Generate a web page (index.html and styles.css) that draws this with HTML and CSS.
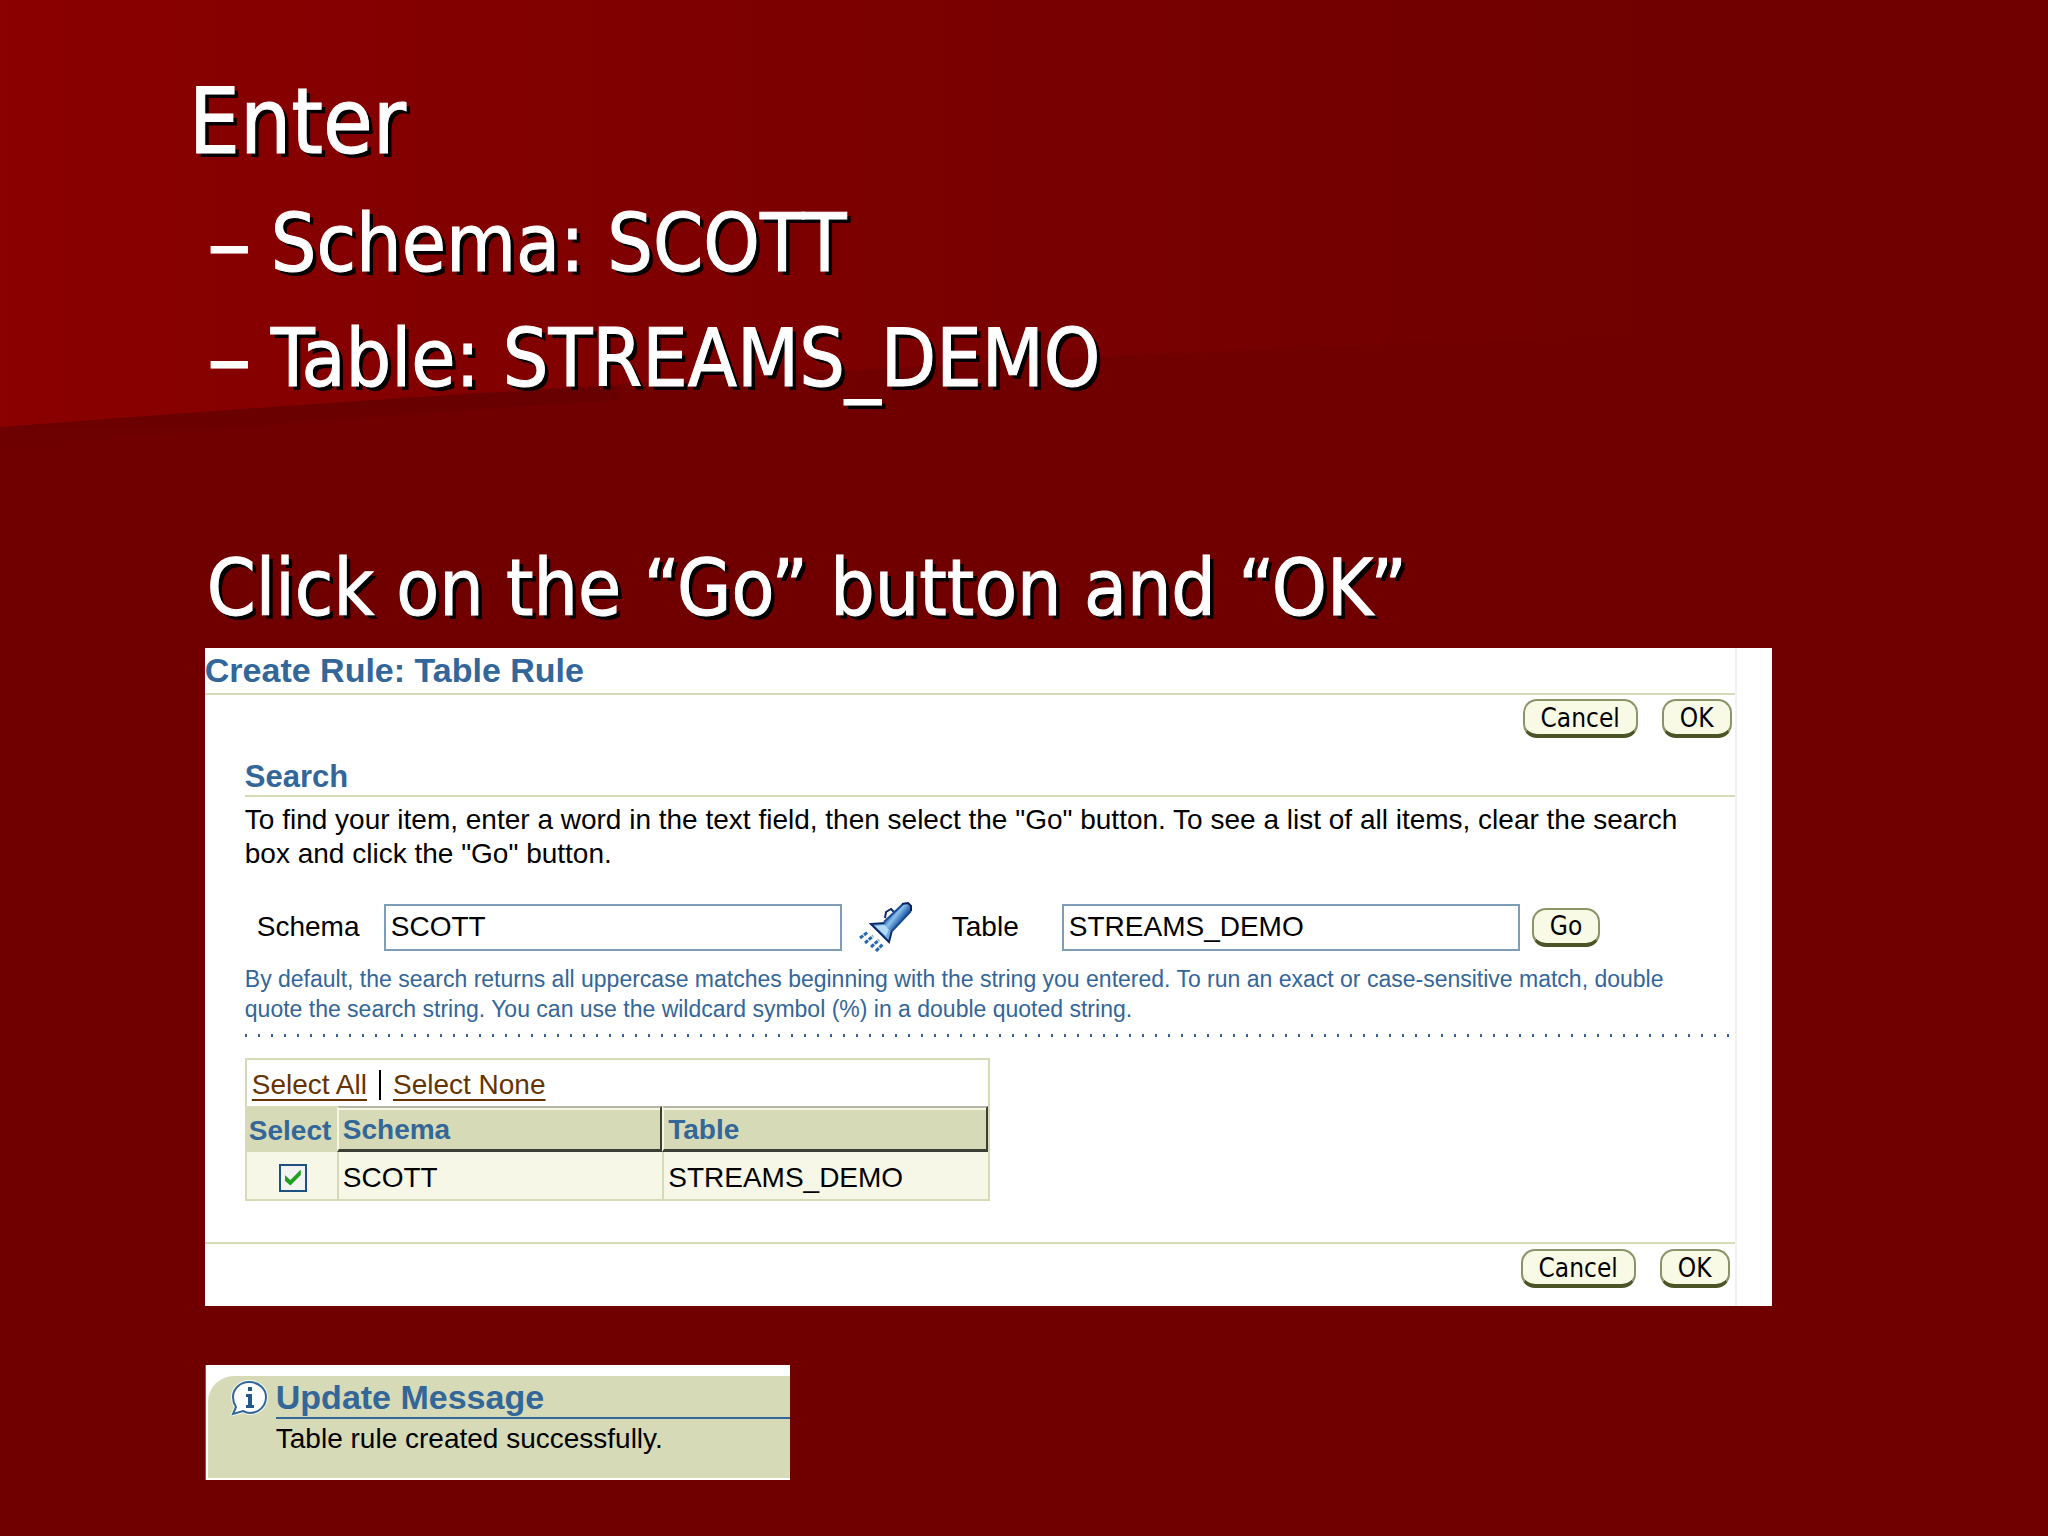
FILE: index.html
```html
<!DOCTYPE html>
<html lang="en">
<head>
    <meta charset="UTF-8">
    <meta name="viewport" content="width=device-width, initial-scale=1.0">
    <title>Create Rule: Table Rule</title>
    <link rel="stylesheet" href="styles.css">
</head>
<body>
    <svg class="backdrop" viewBox="0 0 2048 1536" preserveAspectRatio="none" aria-hidden="true">
        <defs>
            <linearGradient id="band" x1="0" y1="0" x2="1" y2="0">
                <stop offset="0" stop-color="#8b0000"/>
                <stop offset="0.35" stop-color="#7e0000"/>
                <stop offset="0.8" stop-color="#700000"/>
            </linearGradient>
            <linearGradient id="shade" x1="0" y1="0" x2="0" y2="1">
                <stop offset="0" stop-color="#660000"/>
                <stop offset="1" stop-color="#700000"/>
            </linearGradient>
        </defs>
        <path d="M0 426 Q300 402 620 386 L620 400 Q300 420 0 450 Z" fill="url(#shade)"/>
        <path d="M0 0 H2048 V320 Q1000 350 0 427 Z" fill="url(#band)"/>
    </svg>

    <main class="slide">
        <section class="slide-text">
            <h1>Enter</h1>
            <ul>
                <li><span class="dash">–</span>Schema: SCOTT</li>
                <li><span class="dash">–</span>Table: STREAMS_DEMO</li>
            </ul>
            <p>Click on the “Go” button and “OK”</p>
        </section>

        <form class="panel" onsubmit="return false">
            <div class="panel-inner">
                <h2 class="panel-title">Create Rule: Table Rule</h2>
                <div class="button-row">
                    <button type="button" class="btn">Cancel</button>
                    <button type="button" class="btn">OK</button>
                </div>

                <div class="search">
                    <h3>Search</h3>
                    <p class="intro">To find your item, enter a word in the text field, then select the "Go" button. To see a list of all items, clear the search box and click the "Go" button.</p>

                    <div class="fields">
                        <label class="label-schema" for="schema">Schema</label>
                        <input type="text" id="schema" value="SCOTT">
                        <button type="button" class="torch" aria-label="Search schema">
                            <svg width="54" height="50" viewBox="0 0 54 50">
                                <defs>
                                    <linearGradient id="steel" gradientUnits="userSpaceOnUse" x1="34" y1="10" x2="44" y2="18">
                                        <stop offset="0" stop-color="#2f6fb8"/>
                                        <stop offset="0.4" stop-color="#8cc0ec"/>
                                        <stop offset="1" stop-color="#1f5ca6"/>
                                    </linearGradient>
                                </defs>
                                <path d="M27 16 L28 10 L33 7 L36 10" fill="none" stroke="#0b2a66" stroke-width="2"/>
                                <path d="M13 22 L27 21 L34 28 L31 40 Z" fill="#6fa9e0" stroke="#0b2a66" stroke-width="2"/>
                                <path d="M17 24 L27 23 L31 27 L28 34 Z" fill="#b5daf8"/>
                                <path d="M45 2 L50 1 L54 5 L52 10 L34 29 L30 27 L26 21 Z" fill="url(#steel)"/>
                                <path d="M26 20 L45 2 M53 9 L34 29" fill="none" stroke="#1b4c92" stroke-width="2"/>
                                <path d="M44 2 L50 1 L53 4 L53 9" fill="none" stroke="#0b2260" stroke-width="2"/>
                                <path d="M2 36 L10 30 M7 41 L15 34 M13 45 L21 38 M18 49 L25 42" fill="none" stroke="#2868ae" stroke-width="3" stroke-dasharray="4 1"/>
                            </svg>
                        </button>
                        <label class="label-table" for="table">Table</label>
                        <input type="text" id="table" value="STREAMS_DEMO">
                        <button type="submit" class="btn btn-go">Go</button>
                    </div>

                    <p class="hint">By default, the search returns all uppercase matches beginning with the string you entered. To run an exact or case-sensitive match, double quote the search string. You can use the wildcard symbol (%) in a double quoted string.</p>
                    <div class="dots"></div>

                    <div class="results">
                        <div class="select-links">
                            <a href="#all">Select All</a><span class="bar"></span><a href="#none">Select None</a>
                        </div>
                        <table>
                            <thead>
                                <tr>
                                    <th class="col-select">Select</th>
                                    <th class="raised">Schema</th>
                                    <th class="raised">Table</th>
                                </tr>
                            </thead>
                            <tbody>
                                <tr>
                                    <td class="col-select"><input type="checkbox" aria-label="Select SCOTT STREAMS_DEMO" checked></td>
                                    <td>SCOTT</td>
                                    <td>STREAMS_DEMO</td>
                                </tr>
                            </tbody>
                        </table>
                    </div>
                </div>

                <div class="button-row button-row-bottom">
                    <button type="button" class="btn">Cancel</button>
                    <button type="button" class="btn">OK</button>
                </div>
            </div>
        </form>

        <section class="message">
            <div class="message-body">
                <svg class="info" width="38" height="36" viewBox="0 0 38 36" aria-hidden="true">
                    <path d="M19 2 C29 2 36 9 36 17 C36 26 29 33 20 33 C17 33 15 32 13 31 L3 34 L6 27 C4 24 3 21 3 17 C3 9 10 2 19 2 Z" fill="#fff" stroke="#f4f7ee" stroke-width="4"/>
                    <path d="M19 2 C29 2 36 9 36 17 C36 26 29 33 20 33 C17 33 15 32 13 31 L3 34 L6 27 C4 24 3 21 3 17 C3 9 10 2 19 2 Z" fill="#fff" stroke="#336699" stroke-width="2"/>
                    <path d="M18 7 H22 V11 H18 Z M16 14 H22 V25 H24 V28 H16 V25 H18 V17 H16 Z" fill="#24578c"/>
                </svg>
                <div class="message-text">
                    <h2>Update Message</h2>
                    <p>Table rule created successfully.</p>
                </div>
            </div>
        </section>
    </main>
</body>
</html>
```
FILE: styles.css
```css
* {
    margin: 0;
    padding: 0;
    box-sizing: border-box;
}

body {
    font-family: "Liberation Sans", Arial, sans-serif;
    font-size: 28px;
    background: #700000;
    color: #000;
    min-height: 100vh;
}

.backdrop {
    position: absolute;
    top: 0;
    left: 0;
    width: 100%;
    height: 100%;
    z-index: -1;
}

.slide {
    padding: 64px 13.5% 48px 10%;
}

/* Slide text */
.slide-text {
    margin-left: -16px;
    color: #fff;
    font-family: "DejaVu Sans Condensed", Tahoma, sans-serif;
    font-size: 80px;
    line-height: 115px;
    text-shadow: 4px 4px 0 #000;
    -webkit-text-stroke: 1px #fff;
}

.slide-text h1 {
    font-size: 90px;
    font-weight: normal;
    margin-bottom: 7px;
}

.slide-text ul {
    list-style: none;
    padding-left: 18px;
    margin-bottom: 115px;
}

.slide-text li {
    display: flex;
}

.slide-text p {
    padding-left: 18px;
    margin-bottom: 2px;
    font-size: 78px;
}

.dash {
    width: 64px;
    font-family: "DejaVu Sans", sans-serif;
    font-size: 90px;
    text-shadow: none;
}

/* Rule panel */
.panel {
    background: #fff;
    padding-right: 35px;
}

.panel-inner {
    border-right: 2px solid #f1f0f2;
    padding-bottom: 18px;
}

.panel-title {
    color: #336699;
    font-size: 34px;
    line-height: 45px;
    border-bottom: 2px solid #d6dab6;
}

.button-row {
    display: flex;
    justify-content: flex-end;
    gap: 24px;
    padding: 4px 3px 0 0;
}

.button-row-bottom {
    margin-top: 41px;
    padding: 5px 5px 0 0;
    border-top: 2px solid #d6dab6;
}

.btn {
    height: 39px;
    padding: 0 16px;
    border: 2px solid #8b9468;
    border-bottom: 4px solid #4a5426;
    border-radius: 14px;
    background: #f8fae6;
    color: #000;
    font-family: "DejaVu Sans Condensed", Tahoma, sans-serif;
    font-size: 26px;
    line-height: 32px;
    cursor: pointer;
}

.search {
    padding-left: 40px;
}

.search h3 {
    margin-top: 20px;
    color: #336699;
    font-size: 31px;
    line-height: 37px;
    border-bottom: 2px solid #d6dab6;
}

.intro {
    padding: 6px 44px 0 0;
    line-height: 34px;
}

.fields {
    display: flex;
    align-items: center;
    margin-top: 31px;
    padding-left: 12px;
}

.fields input {
    width: 458px;
    height: 47px;
    padding: 0 5px;
    border: 2px solid #7f9db9;
    background: #fff;
    font: inherit;
    color: #000;
}

.label-schema {
    width: 127px;
}

.label-table {
    width: 110px;
}

.torch {
    width: 54px;
    height: 50px;
    margin: 0 40px 0 16px;
    border: 0;
    background: none;
    cursor: pointer;
}

.btn-go {
    margin-left: 12px;
}

.hint {
    margin-top: 12px;
    padding-right: 40px;
    color: #336699;
    font-size: 23px;
    line-height: 30px;
}

.dots {
    height: 3px;
    margin-top: 10px;
    background: linear-gradient(90deg, #3a5fa0 2px, transparent 2px) 0 0 / 13px 3px repeat-x;
}

.results {
    width: 50%;
    margin-top: 21px;
    border: 2px solid #d6dab6;
}

.select-links {
    display: flex;
    align-items: center;
    height: 46px;
    padding: 4px 5px 0;
}

.select-links a {
    color: #663300;
    line-height: 36px;
    text-decoration-thickness: 2px;
    text-underline-offset: 5px;
}

.bar {
    width: 2px;
    height: 30px;
    margin: 0 12px;
    background: #000;
}

.results table {
    width: 100%;
    table-layout: fixed;
    border-collapse: separate;
    border-spacing: 0;
}

.results th {
    height: 46px;
    padding: 2px 4px 0;
    background: #d6dab6;
    color: #336699;
    text-align: left;
}

.results .raised {
    border: 2px solid #3c3f33;
    border-top-color: #b5b7a6;
    border-left-color: #f6f6e2;
    border-bottom-width: 3px;
    box-shadow: inset 0 2px #f6f6e2;
}

.results td {
    height: 47px;
    padding: 4px 4px 0;
    background: #f7f7e7;
    border-left: 2px solid #d6dab6;
}

.results .col-select {
    width: 90px;
    padding: 4px 0 0 2px;
    border-left: 0;
}

.results input {
    appearance: none;
    display: block;
    width: 28px;
    height: 28px;
    margin: 0 auto;
    border: 2px solid #1c5180;
    background: #f3f3f1;
}

.results input:checked::before {
    content: "";
    display: block;
    width: 16px;
    height: 16px;
    margin: 4px;
    background: #21a121;
    clip-path: polygon(0 35%, 35% 65%, 100% 0, 100% 35%, 35% 100%, 0 70%);
}

/* Confirmation message */
.message {
    width: 585px;
    max-width: 100%;
    margin-top: 59px;
    padding: 11px 0 2px 2px;
    border-left: 1px solid #666;
    background: #fff;
}

.message-body {
    display: flex;
    gap: 8px;
    height: 102px;
    padding: 4px 0 0 22px;
    background: #d6dab6;
    border-top-left-radius: 26px;
}

.info {
    flex: none;
}

.message-text {
    flex: 1;
}

.message h2 {
    padding-bottom: 2px;
    color: #336699;
    font-size: 34px;
    line-height: 35px;
    border-bottom: 2px solid #336699;
}

.message p {
    line-height: 40px;
}
```
